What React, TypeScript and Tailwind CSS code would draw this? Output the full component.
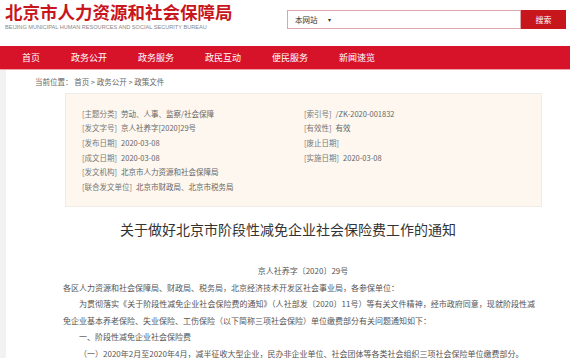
import React from 'react'

const navItems = ['首页', '政务公开', '政务服务', '政民互动', '便民服务', '新闻速览']

const leftMeta = [
  ['[主题分类]', '劳动、人事、监察/社会保障'],
  ['[发文字号]', '京人社养字[2020]29号'],
  ['[发布日期]', '2020-03-08'],
  ['[成文日期]', '2020-03-08'],
  ['[发文机构]', '北京市人力资源和社会保障局'],
  ['[联合发文单位]', '北京市财政局、北京市税务局'],
]

const rightMeta = [
  ['[索引号]', '/ZK-2020-001832'],
  ['[有效性]', '有效'],
  ['[废止日期]', ''],
  ['[实施日期]', '2020-03-08'],
]

const MetaRow: React.FC<{ label: string; value: string }> = ({ label, value }) => (
  <div className="h-[14.7px] flex items-center whitespace-nowrap">
    <span className="text-[#777]">{label}</span>
    {value && <span className="ml-[4px] text-[#666]">{value}</span>}
  </div>
)

const App: React.FC = () => {
  return (
    <div className="w-[570px] h-[358px] overflow-hidden bg-white font-['Noto_Sans_CJK_SC',sans-serif] text-[#333]">
      {/* Header */}
      <div className="h-[46px] flex justify-between items-start px-[5px]">
        <div>
          <div className="text-[17.5px] leading-[23px] font-bold text-[#c8161d]">
            北京市人力资源和社会保障局
          </div>
          <div className="mt-[1px] text-[5.6px] leading-[6px] text-[#888] font-['Liberation_Sans',sans-serif] whitespace-nowrap">
            BEIJING MUNICIPAL HUMAN RESOURCES AND SOCIAL SECURITY BUREAU
          </div>
        </div>
        <div className="flex mt-[10px] mr-[-1px]">
          <div className="w-[234px] h-[19px] border border-[#e0a4ac] flex items-center pl-[7px] text-[7.5px] text-[#333]">
            <span>本网站</span>
            <span className="ml-[10px] text-[6px]">▾</span>
          </div>
          <div className="w-[45px] h-[19px] bg-[#c8161d] text-white text-[8px] flex items-center justify-center">
            搜索
          </div>
        </div>
      </div>

      {/* Nav */}
      <div className="h-[24px] bg-[#d7132a] border-b border-[#f1a2ab] flex items-center pl-[22px] gap-[31px] text-white text-[9px]">
        {navItems.map((item) => (
          <span key={item}>{item}</span>
        ))}
      </div>

      {/* Body */}
      <div className="flex h-full">
        <div className="w-[6px] bg-[#f2f2f2] shrink-0" />
        <div className="flex-1">
          <div className="pl-[29px] pt-[7px] text-[7.5px] leading-[10px] text-[#666]">
            当前位置： 首页 &gt; 政务公开 &gt; 政策文件
          </div>

          <div className="ml-[59px] mt-[6px] w-[477px] h-[114px] bg-[#fdf7ef] border border-[#efebe6] pt-[12px] pl-[16px] flex text-[7.5px]">
            <div className="w-[222px]">
              {leftMeta.map(([l, v]) => (
                <MetaRow key={l} label={l} value={v} />
              ))}
            </div>
            <div>
              {rightMeta.map(([l, v]) => (
                <MetaRow key={l} label={l} value={v} />
              ))}
            </div>
          </div>

          <div className="mt-[14px] text-center text-[14px] leading-[16px] text-[#333]">
            关于做好北京市阶段性减免企业社会保险费工作的通知
          </div>

          <div className="ml-[57px] w-[472px] mt-[26px] text-[8px] leading-[16.5px] text-[#555]">
            <div className="text-center pl-[8px]">京人社养字〔2020〕29号</div>
            <div>各区人力资源和社会保障局、财政局、税务局，北京经济技术开发区社会事业局，各参保单位：</div>
            <div className="indent-[16px] text-justify">
              为贯彻落实《关于阶段性减免企业社会保险费的通知》（人社部发〔2020〕11号）等有关文件精神，经市政府同意，现就阶段性减免企业基本养老保险、失业保险、工伤保险（以下简称三项社会保险）单位缴费部分有关问题通知如下：
            </div>
            <div className="indent-[16px]">一、阶段性减免企业社会保险费</div>
            <div className="indent-[16px]">
              （一）2020年2月至2020年4月，减半征收大型企业，民办非企业单位、社会团体等各类社会组织三项社会保险单位缴费部分。
            </div>
          </div>
        </div>
      </div>
    </div>
  )
}

export default App
